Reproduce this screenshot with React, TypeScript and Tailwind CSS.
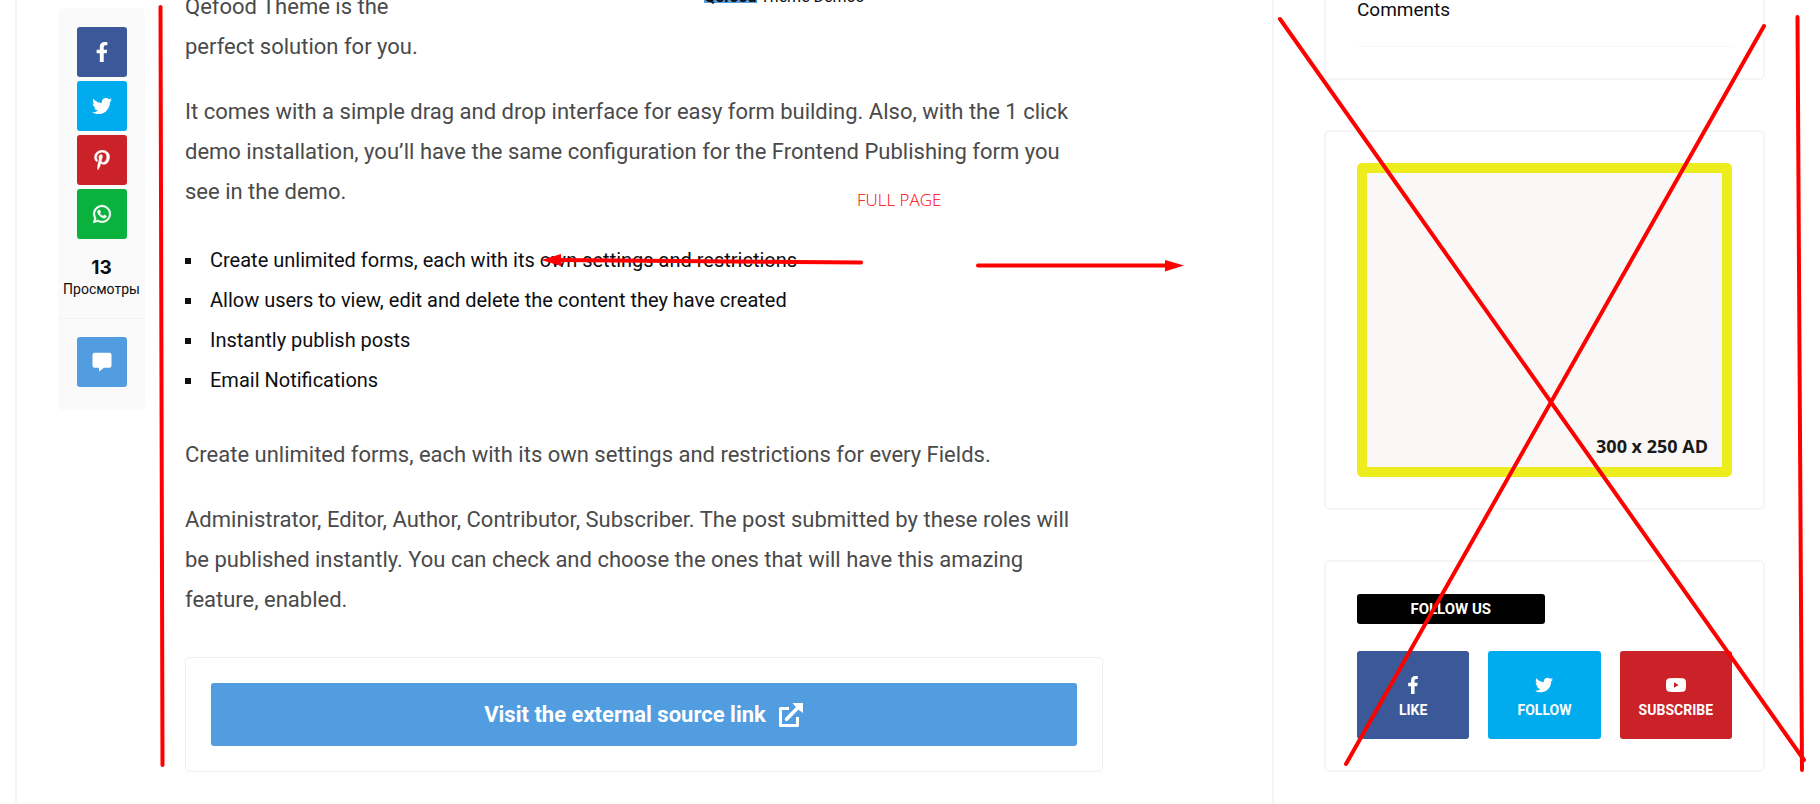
import React from "react";
import { FaFacebookF, FaPinterestP, FaTwitter, FaWhatsapp } from "react-icons/fa";

const shareLinks = [
  { label: "Facebook", icon: FaFacebookF, stroke: 0, className: "bg-[#3b5998]" },
  { label: "Twitter", icon: FaTwitter, stroke: 0, className: "bg-[#00aced]" },
  { label: "Pinterest", icon: FaPinterestP, stroke: 12, className: "bg-[#cb2128]" },
  { label: "WhatsApp", icon: FaWhatsapp, stroke: 16, className: "bg-[#0ab23d]" },
];

const followLinks = [
  { label: "LIKE", icon: <FaFacebookF size={18} />, className: "bg-[#3b5998]" },
  { label: "FOLLOW", icon: <FaTwitter size={18} />, className: "bg-[#00aced]" },
  { label: "SUBSCRIBE", icon: <YoutubeIcon />, className: "bg-[#cb2128]" },
];

const features = [
  "Create unlimited forms, each with its own settings and restrictions",
  "Allow users to view, edit and delete the content they have created",
  "Instantly publish posts",
  "Email Notifications",
];

function YoutubeIcon() {
  return (
    <svg viewBox="0 0 20 18" className="h-[18px] w-5" fill="currentColor" fillRule="evenodd" aria-hidden="true">
      <path d="M3.500 2.200Q10 1.600 16.500 2.200 19.700 2.400 19.900 5.500 20.100 9 19.900 12.500 19.700 15.600 16.500 15.800 10 16.400 3.500 15.800.3 15.600.1 12.500-.1 9 .1 5.500.3 2.400 3.500 2.200zM8 6.200v5.600L12.600 9z" />
    </svg>
  );
}

function CommentIcon() {
  return (
    <svg viewBox="0 0 20 20" className="size-5" fill="currentColor" aria-hidden="true">
      <path d="M2.500.8h15a2 2 0 0 1 2 2v11a2 2 0 0 1-2 2H12l-5 3.700v-3.700H2.500a2 2 0 0 1-2-2v-11a2 2 0 0 1 2-2z" />
    </svg>
  );
}

function ExternalIcon() {
  return (
    <svg viewBox="0 0 26 26" className="size-[26px]" fill="none" stroke="currentColor" strokeWidth="3" aria-hidden="true">
      <path d="M11 6.500H2.500v17h17v-8.500" strokeLinejoin="round" />
      <path d="M8.500 17.300 19 6.500" strokeLinecap="round" strokeWidth="3.600" />
      <path d="M14.500 1H25v10l-3.500-2.500-4.500-4.500z" fill="currentColor" stroke="none" />
    </svg>
  );
}

function ShareBar() {
  return (
    <div className="mt-2 flex w-[87px] shrink-0 flex-col self-start rounded-md bg-[#fafafa]">
      <div className="flex flex-col items-center border-b border-[#f3f3f3] pt-[19px] pb-[19px]">
        <div className="flex flex-col gap-1">
          {shareLinks.map(({ label, icon: Icon, stroke, className }) => (
            <a
              key={label}
              href="#"
              aria-label={label}
              className={`flex size-[50px] items-center justify-center rounded-[3px] text-white ${className}`}
            >
              <Icon size={20} strokeWidth={stroke} />
            </a>
          ))}
        </div>
        <span className="mt-[18px] font-['Inter',sans-serif] text-[19px] leading-[22px] font-bold text-[#0e0e12]">13</span>
        <span className="text-sm text-[#0e0e12]">Просмотры</span>
      </div>
      <div className="flex justify-center pt-[18px] pb-[23px]">
        <a
          href="#comments"
          aria-label="Comment"
          className="flex size-[50px] items-center justify-center rounded-[3px] bg-[#529ce0] text-white"
        >
          <CommentIcon />
        </a>
      </div>
    </div>
  );
}

function Article() {
  return (
    <article className="-mt-[13px] mr-[169px] ml-10 min-w-0 flex-1 text-[22px] leading-10 text-[#4a4a4a]">
      <div className="mb-[25px] flex justify-between">
        <p className="w-[250px]">Qefood Theme is the perfect solution for you.</p>
        <p className="mr-[239px] self-start text-base leading-5 text-[#0e0e12]">
          <a href="#" className="bg-linear-to-t from-transparent from-15% to-[#529ce0] to-15% font-bold">
            Qefood
          </a>{" "}
          Theme Demos
        </p>
      </div>
      <p className="mb-7 pr-4">
        It comes with a simple drag and drop interface for easy form building. Also, with the 1 click demo installation,
        you’ll have the same configuration for the Frontend Publishing form you see in the demo.
      </p>
      <ul className="mb-[35px] text-xl leading-10 text-[#0e0e12]">
        {features.map((item) => (
          <li key={item} className="flex items-center">
            <span className="mt-[2px] mr-[19px] size-[6px] bg-[#0e0e12]" />
            {item}
          </li>
        ))}
      </ul>
      <p className="mb-[25px] pr-4">Create unlimited forms, each with its own settings and restrictions for every Fields.</p>
      <p className="mb-[37px] pr-4">
        Administrator, Editor, Author, Contributor, Subscriber. The post submitted by these roles will be published
        instantly. You can check and choose the ones that will have this amazing feature, enabled.
      </p>
      <div className="rounded-[5px] border border-[#efefef] p-[25px]">
        <a
          href="#"
          className="flex h-[63px] items-center justify-center gap-3 rounded-[3px] bg-[#529ce0] font-bold text-white"
        >
          Visit the external source link
          <ExternalIcon />
        </a>
      </div>
    </article>
  );
}

function Widget({ className = "", children }: { className?: string; children: React.ReactNode }) {
  return <section className={`rounded-md border-2 border-[#f5f5f5] px-[31px] py-[31px] ${className}`}>{children}</section>;
}

function Sidebar() {
  return (
    <aside className="flex w-[548px] shrink-0 flex-col gap-[50px] border-l-2 border-[#f5f5f5] pr-[55px] pl-[50px]">
      <Widget className="-mt-[42px]">
        <div className="border-b border-[#f7f7f7] pt-[5px] pb-[22px] text-[19px] leading-7 text-[#0e0e12]">Comments</div>
      </Widget>
      <Widget>
        <div className="flex h-[314px] items-end justify-end rounded-[5px] border-10 border-[#eded1e] bg-[#f9f8f6] px-[14px] py-[7px] font-['Open_Sans',sans-serif] text-lg font-bold text-[#1a1a1a]">
          300 x 250 AD
        </div>
      </Widget>
      <Widget className="pt-8">
        <h2 className="flex h-[30px] w-1/2 items-center justify-center rounded-[3px] bg-black text-[15px] font-bold text-white">
          FOLLOW US
        </h2>
        <div className="mt-[27px] grid grid-cols-3 gap-[19px]">
          {followLinks.map(({ label, icon, className }) => (
            <a
              key={label}
              href="#"
              className={`flex h-[88px] flex-col items-center justify-center gap-1.5 rounded-[3px] pt-1.5 text-sm font-bold text-white ${className}`}
            >
              {icon}
              {label}
            </a>
          ))}
        </div>
      </Widget>
    </aside>
  );
}

// Red review marks drawn over the page
function Markup() {
  return (
    <div className="pointer-events-none absolute inset-0">
      <svg
        viewBox="0 0 1820 804"
        preserveAspectRatio="none"
        className="h-full w-full"
        stroke="#ff0000"
        strokeWidth="4"
        strokeLinecap="round"
        aria-hidden="true"
      >
        <path d="M160.500 7 162.500 765" />
        <path d="M1797.500 17 1802 770" />
        <path d="M1280 19 1804 760" />
        <path d="M1764 26 1346 764" />
        <path d="M556 260 861 262.500" />
        <path d="M978 265.500H1168" />
        <path d="M541 260 561 254v12z" fill="#ff0000" stroke="none" />
        <path d="M1184 265.500 1165 260v11.500z" fill="#ff0000" stroke="none" />
      </svg>
      <span className="absolute top-[188px] left-[857px] font-['Open_Sans',sans-serif] text-[17px] leading-6 font-light text-[#ff0000]">
        FULL PAGE
      </span>
    </div>
  );
}

export default function App() {
  return (
    <div className="relative flex min-h-screen overflow-hidden bg-white font-['Roboto',sans-serif]">
      <main className="ml-[15px] flex min-w-0 flex-1 border-l-2 border-[#f5f5f5] pl-[41px]">
        <ShareBar />
        <Article />
      </main>
      <Sidebar />
      <Markup />
    </div>
  );
}
